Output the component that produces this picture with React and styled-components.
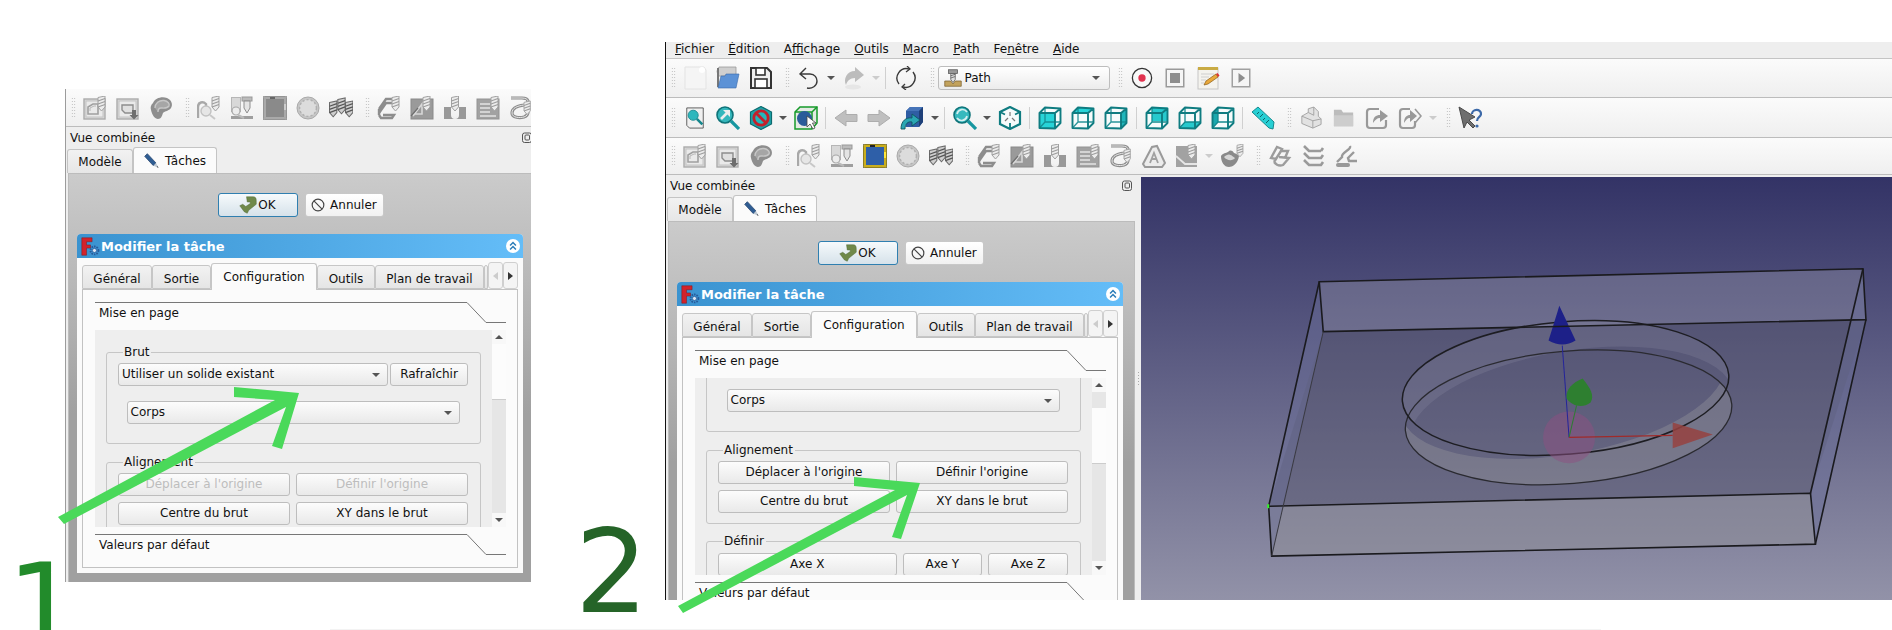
import React from "react";
import styled, { createGlobalStyle } from "styled-components";

const Global = createGlobalStyle`
  html, body { margin: 0; padding: 0; background: #fff; }
  body { font-family: "DejaVu Sans", sans-serif; font-size: 12px; color: #111; }
`;

const Canvas = styled.div`
  position: relative; width: 1892px; height: 630px; overflow: hidden; background: #fff;
`;
const Win = styled.div`
  position: absolute; left: ${p => p.$x}px; top: ${p => p.$y}px;
  width: ${p => p.$w}px; height: ${p => p.$h}px;
  overflow: hidden; background: #eeeeee; display: flex; flex-direction: column;
  border-left: 1px solid ${p => p.$edge};
`;
const MenuBar = styled.div`
  display: flex; height: 16px; line-height: 15px; padding-left: 2px; background: #eee;
  flex: none; border-bottom: 1px solid #c4c4c4; box-sizing: content-box;
`;
const MenuItem = styled.span`
  padding: 0 7px; white-space: nowrap;
`;
const Bar = styled.div`
  display: flex; align-items: center; flex: none; height: ${p => p.$h}px;
  background: linear-gradient(#fbfbfb, #efefef);
  border-bottom: 1px solid #bcbcbc; box-sizing: border-box; overflow: hidden; white-space: nowrap;
`;
const Handle = styled.i`
  flex: none; width: 5px; height: 22px; margin: 0 2.5px 0 ${p => p.$first ? 4.5 : 7.5}px;
  background-image: radial-gradient(circle, #b5b5b5 0.7px, transparent 0.8px);
  background-size: 2.5px 3px;
`;
const Sep = styled.i`
  flex: none; width: 1px; height: 22px; margin: 0 3.25px; background: #d0d0d0;
`;
const Slot = styled.span`
  flex: none; width: 33px; height: 24px; display: flex; align-items: center; justify-content: center;
`;
const Drop = styled.span`
  flex: none; width: 12px; display: flex; justify-content: center;
  &::after {
    content: ""; border: 4px solid transparent; border-bottom-width: 0;
    border-top: 4px solid ${p => p.$off ? "#ccc" : "#555"};
  }
`;
const WbCombo = styled.div`
  flex: none; width: 172px; height: 24px; box-sizing: border-box; margin-right: 1px;
  border: 1px solid #bdbdbd; border-radius: 3px; background: linear-gradient(#fff, #ececec);
  display: flex; align-items: center; gap: 3px; padding: 0 9px 0 5px;
`;
const WbName = styled.span` flex: 1; `;
const Caret = styled.i`
  flex: none; border: 4px solid transparent; border-bottom-width: 0; border-top: 4px solid #555;
`;
const Main = styled.div`
  display: flex; flex: 1; min-height: 0;
`;
const Dock = styled.div`
  flex: none; width: 470px; display: flex; flex-direction: column; background: #eee;
`;
const DockTitle = styled.div`
  flex: none; height: 20px; display: flex; align-items: center; justify-content: space-between;
  box-sizing: border-box; padding: 2px 0 0 4px; line-height: 18px;
`;
const FloatBtn = styled.svg` margin-right: 4px; flex: none; `;
const DockTabs = styled.div`
  flex: none; height: 26px; display: flex; align-items: flex-end; padding-left: 1px;
`;
const DockTab = styled.div`
  box-sizing: border-box; width: ${p => p.$w}px; height: ${p => p.$on ? 26 : 24}px;
  border: 1px solid #c4c4c4; border-bottom: 0; border-radius: 3px 3px 0 0;
  display: flex; align-items: center; justify-content: center; gap: 5px;
  background: ${p => p.$on ? "#fbfbfb" : "linear-gradient(#f2f2f2,#e6e6e6)"};
`;
const DockPanel = styled.div`
  margin-left: 2px; width: 467px; flex: none; height: 460px; box-sizing: border-box;
  border: 1px solid #bcbcbc; padding: 19px 0 0 8px;
  background: linear-gradient(#cbcbcb 0, #a0a0a0 240px, #a0a0a0 100%);
  display: flex; flex-direction: column;
`;
const Actions = styled.div`
  flex: none; display: flex; gap: 7px; height: 24px; margin-bottom: 17px; padding-left: 140.5px;
`;
const ActionBtn = styled.div`
  box-sizing: border-box; width: ${p => p.$w}px; height: 24px; border-radius: 3px;
  border: 1px solid ${p => p.$main ? "#2f7fb0" : "#c8c8c8"};
  background: ${p => p.$main ? "linear-gradient(#f6fafc,#d6e2ea)" : "linear-gradient(#fff,#f1f1f1)"};
  display: flex; align-items: center; justify-content: center; gap: 1px;
`;
const TaskBox = styled.div`
  flex: none; width: 446px; height: 339px; box-sizing: border-box; background: #fafafa;
  border-radius: 4px 4px 0 0; display: flex; flex-direction: column;
`;
const TaskHead = styled.div`
  flex: none; height: 24px; border-radius: 4px 4px 0 0; padding: 0 3.5px 0 4px;
  background: linear-gradient(90deg, #3a93d0, #64bdf8);
  display: flex; align-items: center; gap: 1px;
`;
const TaskTitle = styled.span`
  flex: 1; color: #fff; font-weight: 700; font-size: 13px;
`;
const TaskBody = styled.div`
  flex: 1; padding: 5px 5px 5px 5px; display: flex; flex-direction: column; min-height: 0;
`;
const SubTabs = styled.div`
  flex: none; height: 26px; display: flex; align-items: flex-end;
`;
const SubTab = styled.div`
  flex: none; box-sizing: border-box; width: ${p => p.$w}px; height: ${p => p.$on ? 27 : 24}px;
  margin-bottom: ${p => p.$on ? -1 : 0}px; position: relative;
  border: 1px solid #c6c6c6; border-bottom: ${p => p.$on ? 0 : "1px solid #c6c6c6"}; border-radius: 3px 3px 0 0;
  background: ${p => p.$on ? "#fbfbfb" : "linear-gradient(#f2f2f2,#e5e5e5)"};
  text-align: center; line-height: ${p => p.$on ? 26 : 24}px; overflow: hidden; white-space: nowrap;
  padding-top: ${p => p.$on ? 0 : 1}px;
`;
const TabArrow = styled.div`
  flex: none; box-sizing: border-box; width: 15px; height: 27px; margin-left: ${p => p.$gap}px;
  align-self: flex-end; border: 1px solid #cfcfcf; border-radius: 3px; background: #f4f4f4;
  display: flex; align-items: center; justify-content: center;
  &::after {
    content: ""; border-style: solid; border-color: transparent;
    border-width: 4px 0 4px 5px; border-left-color: #333;
    ${p => p.$left && "border-width: 4px 5px 4px 0; border-left-color: transparent; border-right-color: #ccc;"}
  }
`;
const Pane = styled.div`
  flex: 1; box-sizing: border-box; min-height: 0; border: 1px solid #c2c2c2; background: #fbfbfb;
  padding: 12px 11.5px 0 12px; display: flex; flex-direction: column;
`;
const Heading = styled.div`
  position: relative; flex: none; height: ${p => p.$h}px; padding: 3px 0 0 4px; line-height: 16px;
  box-sizing: border-box;
`;
const HeadLine = styled.svg`
  position: absolute; left: 0; top: 0; overflow: visible; pointer-events: none;
`;
const Scroll = styled.div`
  flex: none; height: 197px; display: flex; overflow: hidden; margin-bottom: 7px;
`;
const ScrollBody = styled.div`
  flex: 1; min-width: 0; background: #eeeeee; padding: 15px 11px 0 10.5px; overflow: hidden;
`;
const ScrollInner = styled.div`
  margin-top: ${p => p.$shift}px;
`;
const ScrollBar = styled.div`
  flex: none; width: 14px; display: flex; flex-direction: column; background: #e6e6e6;
`;
const ScrollBtn = styled.div`
  flex: none; height: 14px; background: #f8f8f8; display: flex; align-items: center; justify-content: center;
  &::after {
    content: ""; border-left: 4px solid transparent; border-right: 4px solid transparent;
    ${p => p.$down ? "border-top: 4px solid #555;" : "border-bottom: 4px solid #555;"}
  }
`;
const ScrollThumb = styled.div`
  flex: none; height: 56px; margin-top: ${p => p.$at}px; background: #fcfcfc;
  border-bottom: 1px solid #ccc; box-sizing: border-box;
`;
const ScrollRest = styled.div` flex: 1; `;
const Group = styled.fieldset`
  margin: 0 0 ${p => p.$gap}px; padding: ${p => p.$pt}px 11.5px ${p => p.$pb}px; min-width: 0;
  border: 1px solid #c6c6c6; border-radius: 3px;
`;
const Legend = styled.legend`
  margin-left: 5px; padding: 0 2px 0 1px; line-height: 14px;
`;
const Row = styled.div`
  display: flex; gap: 2px; margin-bottom: 15px;
`;
const Grid = styled.div`
  display: grid; grid-template-columns: ${p => p.$cols}; gap: 6px;
`;
const QBtn = styled.div`
  box-sizing: border-box; height: 23px; border: 1px solid #bdbdbd; border-radius: 3px;
  background: linear-gradient(#fcfcfc, #e9e9e9); text-align: center; line-height: 21px;
  color: ${p => p.$off ? "#bdbdbd" : "#111"}; flex: ${p => p.$grow ? "1" : "none"};
  white-space: nowrap;
`;
const QCombo = styled.div`
  box-sizing: border-box; height: 23px; border: 1px solid #bdbdbd; border-radius: 3px;
  background: linear-gradient(#fcfcfc, #e9e9e9); line-height: 21px; padding: 0 7px 0 3px;
  display: flex; align-items: center; justify-content: space-between;
  flex: none; width: ${p => p.$w}px; margin-left: ${p => p.$ml || 0}px;
`;
const Viewport = styled.div`
  flex: 1; min-width: 0; margin-top: 2px;
  background: linear-gradient(#333366, #9292a8);
`;
const Splitter = styled.div`
  flex: none; width: 5px; display: flex; align-items: center; justify-content: center;
  &::after {
    content: ""; width: 3px; height: 16px; margin-top: -17px;
    background-image: radial-gradient(circle, #aaa 0.6px, transparent 0.7px); background-size: 3px 3px;
  }
`;
const SceneSvg = styled.svg` display: block; width: 100%; height: 100%; `;
const Overlay = styled.svg`
  position: absolute; left: 0; top: 0; pointer-events: none;
`;
const Numeral = styled.span`
  position: absolute; left: ${p => p.$x}px; top: ${p => p.$y}px; font-family: "DejaVu Sans", sans-serif;
  font-size: 115px; line-height: 1; color: ${p => p.$c};
`;
const FootLine = styled.div`
  position: absolute; left: 330px; top: 629px; width: 1271px; height: 1px; background: #f3f3f3;
`;

/* ---------- icon drawing ---------- */
const S = ({ children, w = 24, h = 24 }) => (
  <svg width={w} height={h} viewBox="0 0 24 24" style={{ display: "block" }}>{children}</svg>
);
const Bit = ({ x = 16, y = 1, k = 1, dark }) => (
  <g transform={`translate(${x} ${y}) scale(${k})`}>
    <path d="M0 1.5 L7 0 V11 L3.5 15 L0 11 Z" fill={dark ? "#cfcfcf" : "#ececec"} stroke={dark ? "#6a6a6a" : "#a2a2a2"} strokeWidth="1" />
    <path d="M0 5 L7 2.5 M0 8 L7 5.5 M0 11 L7 8.5" stroke={dark ? "#555" : "#9c9c9c"} strokeWidth="1.2" />
  </g>
);
const Frame = ({ children }) => (
  <g>
    <rect x="1" y="3" width="21" height="20" fill="#d9d9d9" stroke="#ababab" strokeWidth="1.4" />
    <rect x="3" y="5" width="17" height="16" fill="#eaeaea" stroke="#c4c4c4" />
    {children}
  </g>
);

const G = {
  contour: () => <S><Frame><path d="M5 17 V11 L10 8 H15 V18 H5 Z" fill="none" stroke="#a0a0a0" strokeWidth="1.6" /><path d="M7 15 V12 L11 10 H13" fill="none" stroke="#b8b8b8" /></Frame><Bit x="15" y="0" /></S>,
  pocketShape: () => <S><Frame><path d="M6 9 H17 V17 H9 L6 14 Z" fill="#e0e0e0" stroke="#8d8d8d" strokeWidth="1.4" /></Frame><path d="M16 14 h4 v5 h2.5 l-4.5 4.5 -4.5 -4.5 h2.5 z" fill="#6e6e6e" /></S>,
  head: () => <S><path d="M2 14 C1 10 3 8 4 7 C6 2 13 0 18 2 C23 4 24 9 22 12 C20 15 16 15 14 17 C13 20 12 23 9 23 C6 23 3 19 2 14 Z" fill="#8e8e8e" /><path d="M6 12 C6 7 10 4 15 4.5 C19 5 21 8 20 10 C18 13 14 12 12 12 C10 12 9 14 9 16" fill="#a6a6a6" stroke="#c6c6c6" strokeWidth="1.4" /></S>,
  ringBit: () => <S><path d="M1 22 V11 C1 6 6 5 9 8 V16" fill="none" stroke="#a8a8a8" strokeWidth="2.4" /><circle cx="9" cy="15" r="5" fill="#e6e6e6" stroke="#c2c2c2" strokeWidth="1.4" /><path d="M13 19 L18 23" stroke="#c8c8c8" strokeWidth="2" /><Bit x="15" y="0" /></S>,
  machine: () => <S><rect x="1.5" y="1.5" width="9" height="14" fill="#d8d8d8" stroke="#b6b6b6" /><rect x="12" y="1" width="10" height="4" fill="#bbb" stroke="#999" /><path d="M14 5 H20 V12 L17 17 L14 12 Z" fill="#e4e4e4" stroke="#8e8e8e" /><circle cx="6" cy="15" r="4" fill="#ececec" stroke="#a8a8a8" strokeWidth="1.2" /><rect x="1" y="20" width="22" height="3" fill="#9e9e9e" /><path d="M8 19 L14 22" stroke="#bbb" strokeWidth="2" /></S>,
  board: ({ c }) => <S><rect x="1.5" y="1.5" width="21" height="21" rx="1" fill={c ? "#2e5fa8" : "#8a8a8a"} stroke={c ? "#c9ae1e" : "#a9a9a9"} strokeWidth="3" /><rect x="0" y="0" width="24" height="24" rx="1" fill="none" stroke={c ? "#3a3a2a" : "#777"} strokeWidth=".8" /><rect x="7" y="1" width="5" height="2" fill={c ? "#222" : "#666"} /><rect x="21" y="8" width="2" height="6" fill={c ? "#ffe63a" : "#ccc"} /></S>,
  disc: () => <S><circle cx="12" cy="12" r="11" fill="#c6c6c6" stroke="#aaa" strokeWidth="1" /><circle cx="12" cy="12" r="8.4" fill="#dcdcdc" stroke="#b0b0b0" strokeWidth="1.4" strokeDasharray="2.2 2" /></S>,
  threeBits: () => <S><Bit x="0.5" y="5" k="1.05" dark /><Bit x="8.8" y="2" k="1.05" dark /><Bit x="16.5" y="5" k="1.05" dark /></S>,
  stackBit: () => <S><path d="M2 13 L9 3 H15 M2 17 L9 7 H15 M2 19 L4 22 H15 L17 19 H6" fill="none" stroke="#8d8d8d" strokeWidth="2.4" /><path d="M2 13 V19" stroke="#8d8d8d" strokeWidth="2.4" /><Bit x="15" y="0" /></S>,
  diagBit: () => <S><rect x="1" y="3" width="22" height="20" fill="#9a9a9a" stroke="#8a8a8a" /><path d="M3 20 L12 8 V18 H3" fill="none" stroke="#d8d8d8" strokeWidth="1.6" /><path d="M1 20 L8 12" stroke="#6e6e6e" strokeWidth="1.2" /><Bit x="13" y="0" /></S>,
  blockBit: () => <S><path d="M1 11 H8 V19 A3.5 3.5 0 0 0 16 19 V11 H23 V23 H1 Z" fill="#999" /><Bit x="8.5" y="0" /><path d="M10 20 A2 2 0 0 0 14 20" stroke="#eee" fill="none" /></S>,
  linesBit: () => <S><rect x="1" y="3" width="22" height="20" fill="#a2a2a2" stroke="#939393" /><path d="M4 8 H14 M4 12 H14 M4 16 H14 M4 20 H20" stroke="#e4e4e4" strokeWidth="1.5" /><Bit x="15" y="0" /></S>,
  spiral: () => <S>{[3.2, 1].map((sw, i) => <path key={sw} d="M2 2 H13 C20 2 21 7 15 9 C8 10 3 12 3 17 C3 22 11 22 15 21 C18 20 19 18 19 16" fill="none" stroke={i ? "#e6e6e6" : "#8c8c8c"} strokeWidth={sw} />)}<Bit x="15" y="5" k=".9" /></S>,
  engrave: () => <S><path d="M1 20 L10 3 L15 2 L23 19 L20 23 H3 Z" fill="#ececec" stroke="#9a9a9a" strokeWidth="2" /><path d="M8 19 L12 9 L16 19 M9.5 15 H14.5" fill="none" stroke="#a0a0a0" strokeWidth="1.8" /></S>,
  vBit: () => <S><rect x="1" y="2" width="21" height="21" fill="#a2a2a2" /><path d="M1 12 L10 20 H22" fill="none" stroke="#e6e6e6" strokeWidth="1.8" /><Bit x="13" y="0" /></S>,
  bowl: () => <S><path d="M1 12 C3 9 6 9 8 8 C10 6 12 6 14 9 C16 10 18 10 19 12 C18 20 12 23 9 23 C4 23 1 18 1 12 Z" fill="#8a8a8a" /><path d="M4 13 C6 11 9 10 10 11 C12 11 13 13 15 14 C13 17 7 17 4 13 Z" fill="#d6d6d6" /><Bit x="17" y="0" k=".85" /></S>,
  loops: () => <S><path d="M3 14 L9 3 L14 5 L8 15 Z M6 18 L13 7 H20 L17 14 M6 18 Q10 23 15 21 L21 14 L11 13" fill="none" stroke="#9c9c9c" strokeWidth="2.4" /></S>,
  zig: () => <S><path d="M3 2 L8 7 H20 M3 9 L8 14 H20 L22 11 M3 16 L8 21 H20 L22 18 M20 7 L22 4" fill="none" stroke="#9a9a9a" strokeWidth="2.6" /></S>,
  slither: () => <S><path d="M16 2 C18 6 7 8 8 13 L3 18 M20 8 L14 14 L15 17 H23" fill="none" stroke="#999" strokeWidth="2.4" /><rect x="2" y="19" width="14" height="4" rx="2" fill="#999" /></S>,

  newDoc: () => <S><path d="M2 1 H21 L23 4 V23 H2 Z" fill="#f5f5f5" stroke="#e3e3e3" /><circle cx="19" cy="4" r="3" fill="#fff" /></S>,
  open: () => <S><path d="M1 5 L3 1 H20 V10 H2 Z" fill="#cfcfcf" stroke="#9a9a9a" strokeWidth=".8" /><path d="M2 2 V21" stroke="#777" strokeWidth="2" /><path d="M2 22 L5 10 H9 L10 8 H23 L20 22 Z" fill="#5c92d6" stroke="#3a6aa8" strokeWidth=".6" /></S>,
  save: () => <S><path d="M2 2 H18 L22 6 V22 H2 Z" fill="#efefef" stroke="#333" strokeWidth="2" /><rect x="7" y="2" width="9" height="7" fill="#fff" stroke="#333" strokeWidth="1.6" /><rect x="6" y="13" width="12" height="9" fill="#fff" stroke="#333" strokeWidth="1.6" /></S>,
  undo: () => <S><path d="M9 2 L3 8 L9 13 M3 8 H13 C18 8 20 12 20 15 C20 20 15 23 10 22" fill="none" stroke="#3a3a3a" strokeWidth="1.4" /></S>,
  redo: () => <S><path d="M13 1 L22 9 L13 16 V12 C8 12 5 15 4 19 C1 13 5 5 13 5 Z" fill="#bcbcbc" /><ellipse cx="11" cy="21" rx="8" ry="2.5" fill="#e6e6e6" /></S>,
  refresh: () => <S><path d="M5 18 A9.5 9.5 0 0 1 15 3 M19 6 A9.5 9.5 0 0 1 9 21" fill="none" stroke="#3a3a3a" strokeWidth="1.4" /><path d="M13 0 L16 3 L12 6 M11 18 L8 21 L12 24" fill="none" stroke="#3a3a3a" strokeWidth="1.3" /></S>,
  wb: () => <S w={18} h={18}><rect x="6" y="1" width="12" height="5" fill="#999" stroke="#555" /><path d="M9 6 H15 V14 L12 18 L9 14 Z" fill="#ddd" stroke="#555" /><path d="M9 9 L15 7 M9 12 L15 10" stroke="#555" /><path d="M1 16 H9 L12 20 L15 16 H23 V23 H1 Z" fill="#c2a25c" stroke="#7b6230" /></S>,
  record: () => <S w={22} h={22}><circle cx="12" cy="12" r="10.5" fill="#f8f8f8" stroke="#333" strokeWidth="1.4" /><circle cx="12" cy="12" r="4" fill="#e1324f" /></S>,
  stop: () => <S w={20} h={20}><rect x="1.5" y="1.5" width="21" height="21" fill="#f5f5f5" stroke="#9a9a9a" strokeWidth="1.8" /><rect x="6" y="6" width="12" height="12" fill="#8d8d8d" /></S>,
  note: () => <S><rect x="2" y="2" width="20" height="21" fill="#f4f3ee" stroke="#c6c6c6" /><rect x="2" y="1" width="20" height="3" fill="#c9ab44" /><path d="M5 8 H18 M5 11 H13 M5 14 H10 M5 17 H8" stroke="#cfcfcf" /><path d="M8 19 L10 15 L20 8 L22 11 L12 18 Z" fill="#e9a93b" stroke="#8a5c12" strokeWidth=".7" /><path d="M20 8 L22 11 L23.5 9.5 L21.5 7 Z" fill="#d33" /></S>,
  play: () => <S w={20} h={20}><rect x="1.5" y="1.5" width="21" height="21" fill="#f5f5f5" stroke="#a0a0a0" strokeWidth="1.8" /><path d="M9 6 L17 12 L9 18 Z" fill="#8d8d8d" /></S>,

  docZoom: () => <S w={22} h={24}><path d="M3 1 H21 V23 H6 L3 20 Z" fill="#f0f0f0" stroke="#555" /><circle cx="10" cy="9" r="5.5" fill="#2db7bd" stroke="#1a8b90" strokeWidth="1" /><path d="M14 13 L20 19" stroke="#15868c" strokeWidth="2.8" /></S>,
  zoomArrow: () => <S><circle cx="9" cy="9" r="8" fill="#35b7bc" stroke="#0f7379" strokeWidth="1.6" /><path d="M15 15 L23 23" stroke="#1696a0" strokeWidth="3.2" /><path d="M5 13 L12 6" stroke="#eee" strokeWidth="2.6" /><path d="M7 4 H14 V11 Z" fill="#eee" /></S>,
  noHex: () => <S><path d="M12 0.5 L22.5 6 V18 L12 23.5 L1.5 18 V6 Z" fill="#1ea2a8" stroke="#0d6a6e" strokeWidth="1.2" /><circle cx="12" cy="12" r="7.2" fill="#23b6bb" stroke="#c2202b" strokeWidth="2.8" /><path d="M7 7 L17 17" stroke="#c2202b" strokeWidth="2.8" /></S>,
  cubeSel: () => <S><path d="M1 6 L6 1 H23 V17 L18 23 H1 Z" fill="#e4eae4" stroke="#169a2a" strokeWidth="1.5" /><path d="M1 6 H18 V23 M18 6 L23 1" stroke="#169a2a" fill="none" strokeWidth="1.5" /><circle cx="10.5" cy="12.5" r="7.5" fill="#2b5c9a" /><path d="M13 10 V21 L16 18 L19 23 L21 22 L18.5 17 H22 Z" fill="#fff" stroke="#444" strokeWidth=".8" /></S>,
  back: () => <S><path d="M12 4 L1 12 L12 20 V15.5 H23 V8.5 H12 Z" fill="#bfbfbf" stroke="#adadad" /></S>,
  forward: () => <S><path d="M12 4 L23 12 L12 20 V15.5 H1 V8.5 H12 Z" fill="#bfbfbf" stroke="#adadad" /></S>,
  blueCube: () => <S><path d="M6 5 L10 1 H23 V16 L19 21 H6 Z" fill="#2f5da3" /><path d="M6 5 H19 L23 1 H10 Z" fill="#4674b8" /><path d="M19 5 V21 L23 16 V1 Z" fill="#1e3f78" /><path d="M1 23 C1 15 6 11 12 12 V8 L20 14 L12 20 V16 C8 15 5 18 5 23 Z" fill="#2aa6b3" stroke="#0e5660" strokeWidth=".9" /></S>,
  zoomSync: () => <S><circle cx="9" cy="9" r="8" fill="#37b9be" stroke="#0f7379" strokeWidth="1.6" /><path d="M15 15 L23 23" stroke="#1696a0" strokeWidth="3.2" /><path d="M4 8 A5.5 5.5 0 0 1 14 6 M14 10 A5.5 5.5 0 0 1 4 12" fill="none" stroke="#d7eeef" strokeWidth="1.7" /></S>,
  ruler: () => <S><path d="M1 6 L7 1 L23 16 L22 23 L18 22 Z" fill="#27cfd4" stroke="#17898e" /><path d="M6 8 L8 6 M9 11 L12 8 M12 14 L14 12 M15 17 L18 14" stroke="#0f6468" /></S>,
  part: () => <S w={22} h={24}><path d="M2 10 L9 6 V2 L15 0 L20 5 V10 L23 13 V19 L14 23 L2 18 Z" fill="#e2e2e2" stroke="#a0a0a0" /><path d="M2 10 L14 15 L23 13 M14 15 V23 M9 6 L15 9 V5 M15 0 V5" fill="none" stroke="#a0a0a0" /></S>,
  folderGray: () => <S w={22} h={22}><path d="M1 3 H9 L11 6 H22 V21 H1 Z" fill="#bcbcbc" /><path d="M1 9 H22 V21 H1 Z" fill="#cdcdcd" /></S>,
  share: () => <S><path d="M14 3 H5 Q2 3 2 6 V19 Q2 22 5 22 H18 Q21 22 21 19 V14" fill="none" stroke="#999" strokeWidth="2.2" /><path d="M8 17 C8 11 11 9 15 9 V4 L23 10 L15 16 V12 C12 12 10 14 8 17 Z" fill="#999" /></S>,
  share2: () => <S w={24}><path d="M12 3 H5 Q2 3 2 6 V19 Q2 22 5 22 H14 Q17 22 17 19 V15" fill="none" stroke="#999" strokeWidth="2.2" /><path d="M6 17 C6 11 9 9 12 9 V4 L19 10 L12 16 V12 C9 12 8 14 6 17 Z" fill="#999" /><path d="M17 3 L23 10 L17 17" fill="none" stroke="#999" strokeWidth="1.6" /></S>,
  help: () => <S><path d="M1 1 L6 22 L9 16 L15 22 L17 20 L11 14 L17 11 Z" fill="#6e6e6e" stroke="#4a4a4a" /><path d="M14 8 C14 3 23 2 23 8 C23 11 19 11 19 15" fill="none" stroke="#3c69a8" strokeWidth="2.2" /><circle cx="19" cy="20" r="1.6" fill="#3c69a8" /></S>,
  ok: () => <S w={18} h={18}><path d="M10 1 H19 C22 1 23 3 23 6 V11 L13 19 L11 23 L7 21 L1 13 L5 11 L9 14 L15 10 V8 H11 Z" fill="#70894a" stroke="#4f6633" strokeWidth=".6" /></S>,
  ban: () => <S w={14} h={14}><circle cx="12" cy="12" r="10" fill="none" stroke="#444" strokeWidth="2" /><path d="M5 5 L19 19" stroke="#444" strokeWidth="2" /></S>,
  pencil: () => <S w={16} h={16}><path d="M1 5 L5 1 L18 15 L14 19 Z" fill="#2f5d93" stroke="#1e3d66" /><path d="M14 19 L18 15 L22 22 Z" fill="#bcc7d2" /><path d="M20 20 L22 22 L19 21 Z" fill="#111" /></S>,
  logo: () => <S w={19} h={19}><path d="M1 1 H14 V6 H7 V10 H12 V14 H7 V23 H1 Z" fill="#d3232b" stroke="#80151a" strokeWidth=".6" /><circle cx="17" cy="17" r="5" fill="none" stroke="#275a9b" strokeWidth="2.4" strokeDasharray="2 1.2" /><circle cx="17" cy="17" r="2.6" fill="#dde7f4" stroke="#275a9b" /></S>,
  collapse: () => <S w={14} h={14}><circle cx="12" cy="12" r="12" fill="#fff" /><path d="M7 11 L12 6 L17 11 M7 18 L12 13 L17 18" fill="none" stroke="#2a7cb8" strokeWidth="2.6" /></S>
};

const Cube = ({ face }) => (
  <S>
    <path d="M1.5 7 L7 1.5 L22.5 2.5 L22.5 17 L17 22.5 L1.5 22 Z" fill="#f6fbfb" />
    {face === "rear" && <path d="M7 1.5 H22.5 V15 H7 Z" fill="#27c9cd" />}
    {face === "floor" && <path d="M7 16 H22.5 L17 22.5 H1.5 Z" fill="#27c9cd" />}
    {face === "leftSide" && <path d="M1.5 7 L7 1.5 V16 L1.5 22 Z" fill="#1aa8ad" />}
    {face === "front" && <path d="M1.5 7 H17 V22.5 L1.5 22 Z" fill="#27d4d8" />}
    {face === "top" && <path d="M1.5 7 L7 1.5 L22.5 2.5 L17 7 Z" fill="#27d4d8" />}
    {face === "side" && <path d="M17 7 L22.5 2.5 V17 L17 22.5 Z" fill="#1fb6bb" />}
    <path d="M7 1.5 V16 H22.5 M7 16 L1.5 22" fill="none" stroke="#148a8f" strokeWidth="1.3" opacity={face === "rear" || face === "floor" || face === "leftSide" ? 1 : 0.9} />
    <path d="M1.5 7 L7 1.5 L22.5 2.5 V17 L17 22.5 L1.5 22 Z M1.5 7 H17 V22.5 M17 7 L22.5 2.5" fill="none" stroke="#0f7c81" strokeWidth="1.9" strokeLinejoin="round" />
  </S>
);
const Iso = () => (
  <S><path d="M12 1 L22 6 V18 L12 23 L2 18 V6 Z" fill="#f6fbfb" stroke="#0f7c81" strokeWidth="2.2" /><path d="M2 6 L7 8.5 M22 6 L17 8.5 M12 23 V17" stroke="#0f7c81" strokeWidth="1.8" /><path d="M12 6 V10 M10 12 L7 15 M14 12 L17 15" stroke="#777" strokeWidth="1.2" /></S>
);
const I = ({ n, ...rest }) => { const C = G[n]; return <Slot><C {...rest} /></Slot>; };
const C3 = ({ face }) => <Slot><Cube face={face} /></Slot>;

const PathTools = ({ color }) => (
  <>
    <Handle $first />
    <I n="contour" /><I n="pocketShape" /><I n="head" />
    <Handle />
    <I n="ringBit" /><I n="machine" /><I n="board" c={color} /><I n="disc" /><I n="threeBits" />
    <Handle />
    <I n="stackBit" /><I n="diagBit" /><I n="blockBit" /><I n="linesBit" /><I n="spiral" /><I n="engrave" /><I n="vBit" />
    <Drop $off />
    <I n="bowl" />
    <Handle />
    <I n="loops" /><I n="zig" /><I n="slither" />
  </>
);

const Under = ({ pre = "", k, post = "" }) => <MenuItem>{pre}<u>{k}</u>{post}</MenuItem>;

const Corner = () => (
  <HeadLine width="411" height="21">
    <path d="M0 .5 H372 L391 20.5 H411" fill="none" stroke="#777" strokeWidth="1" />
  </HeadLine>
);

const DockView = ({ title, shift, thumbAt, disabled }) => (
  <Dock>
    <DockTitle>
      <span>{title}</span>
      <FloatBtn width="10" height="12" viewBox="0 0 10 12">
        <rect x=".5" y="1" width="9" height="9.5" rx="2" fill="none" stroke="#555" />
        <rect x="3" y="3" width="4.5" height="5" rx="1" fill="none" stroke="#555" />
      </FloatBtn>
    </DockTitle>
    <DockTabs>
      <DockTab $w={66}>Modèle</DockTab>
      <DockTab $w={84} $on><G.pencil />Tâches</DockTab>
    </DockTabs>
    <DockPanel>
      <Actions>
        <ActionBtn $w={80} $main><G.ok />OK</ActionBtn>
        <ActionBtn $w={79}><G.ban />&nbsp;Annuler</ActionBtn>
      </Actions>
      <TaskBox>
        <TaskHead>
          <G.logo />
          <TaskTitle>Modifier la tâche</TaskTitle>
          <G.collapse />
        </TaskHead>
        <TaskBody>
          <SubTabs>
            <SubTab $w={70}>Général</SubTab>
            <SubTab $w={59}>Sortie</SubTab>
            <SubTab $w={106} $on>Configuration</SubTab>
            <SubTab $w={58}>Outils</SubTab>
            <SubTab $w={109}>Plan de travail</SubTab>
            <SubTab $w={4} />
            <TabArrow $left $gap={0} />
            <TabArrow $gap={0} />
          </SubTabs>
          <Pane>
            <Heading $h={28}><Corner />Mise en page</Heading>
            <Scroll>
              <ScrollBody>
                <ScrollInner $shift={shift}>
                  <Group $gap={11} $pt={4} $pb={19}>
                    <Legend>Brut</Legend>
                    <Row>
                      <QCombo $w={270}>Utiliser un solide existant<Caret /></QCombo>
                      <QBtn $grow>Rafraîchir</QBtn>
                    </Row>
                    <QCombo $w={333} $ml={8.5}>Corps<Caret /></QCombo>
                  </Group>
                  <Group $gap={10} $pt={4} $pb={10}>
                    <Legend>Alignement</Legend>
                    <Grid $cols="1fr 1fr">
                      <QBtn $off={disabled}>Déplacer à l'origine</QBtn>
                      <QBtn $off={disabled}>Définir l'origine</QBtn>
                      <QBtn>Centre du brut</QBtn>
                      <QBtn>XY dans le brut</QBtn>
                    </Grid>
                  </Group>
                  <Group $gap={10} $pt={5} $pb={10}>
                    <Legend>Définir</Legend>
                    <Grid $cols="178.5px 79.5px 1fr">
                      <QBtn>Axe X</QBtn>
                      <QBtn>Axe Y</QBtn>
                      <QBtn>Axe Z</QBtn>
                    </Grid>
                  </Group>
                </ScrollInner>
              </ScrollBody>
              <ScrollBar>
                <ScrollBtn />
                <ScrollThumb $at={thumbAt} />
                <ScrollRest />
                <ScrollBtn $down />
              </ScrollBar>
            </Scroll>
            <Heading $h={34}><Corner />Valeurs par défaut</Heading>
          </Pane>
        </TaskBody>
      </TaskBox>
    </DockPanel>
  </Dock>
);

const ELL_A = { cx: 1565, cy: 387.5, rx: 163.5, ry: 66.4, transform: "rotate(-4.7 1565 387.5)" };
const ELL_B = { cx: 1568, cy: 417, rx: 163.5, ry: 66.4, transform: "rotate(-4.7 1568 417)" };

const Scene = () => (
  <SceneSvg viewBox="1141 176 751 424" preserveAspectRatio="none">
    <defs>
      <mask id="outsideA">
        <rect x="1141" y="176" width="751" height="424" fill="#fff" />
        <ellipse {...ELL_A} fill="#000" />
      </mask>
      <mask id="outsideB">
        <rect x="1141" y="176" width="751" height="424" fill="#fff" />
        <ellipse {...ELL_B} fill="#000" />
      </mask>
    </defs>
    <polygon points="1319,281 1862,268 1865,319 1323,331" fill="#8e8ea4" fillOpacity=".42" />
    <polygon points="1323,331 1865,319 1809.6,493 1268.5,506" fill="#55556a" fillOpacity=".45" />
    <polygon points="1268.5,506 1809.6,493 1814.5,544 1271.5,556" fill="#8f8f98" fillOpacity=".5" />
    <polygon points="1319,281 1323,331 1271.5,556 1268.5,506" fill="#6b6f98" fillOpacity=".45" />
    <polygon points="1862,268 1865,319 1814.5,544 1809.6,493" fill="#6b6f98" fillOpacity=".45" />
    <ellipse {...ELL_B} fill="#a6a6a6" fillOpacity=".3" mask="url(#outsideA)" />
    <ellipse {...ELL_A} fill="#8a8aa2" fillOpacity=".28" mask="url(#outsideB)" />
    <ellipse {...ELL_B} fill="none" stroke="#2a2a30" strokeWidth="1.3" />
    <ellipse {...ELL_A} fill="none" stroke="#1d1d22" strokeWidth="1.5" />
    <ellipse cx="1568.5" cy="437" rx="26" ry="26" fill="#8e4f82" fillOpacity=".5" />
    <path d="M1568.5 437 L1561.7 345" stroke="#25259a" strokeWidth="1" />
    <path d="M1568.5 437 L1576 405" stroke="#2d7d32" strokeWidth="1" />
    <path d="M1568.5 437 L1672 435" stroke="#a02a2a" strokeWidth="1.4" />
    <path d="M1558.8 305 L1575 340 Q1562 348 1548 340 Z" fill="#1d2088" />
    <path d="M1582 378 C1590 388 1594 395 1590 402 C1582 408 1572 406 1566 398 C1565 389 1572 382 1582 378 Z" fill="#2e7f30" />
    <polygon points="1672,422 1712,434 1672,448" fill="#96423f" fillOpacity=".85" />
    <g fill="none" stroke="#1a1a1e" strokeWidth="1.6">
      <path d="M1319 281 L1862 268 L1865 319 L1323 331 Z" />
      <path d="M1319 281 L1268.5 506 M1862 268 L1809.6 493 M1865 319 L1814.5 544" />
      <path d="M1268.5 506 L1809.6 493 L1814.5 544 L1271.5 556 Z" />
    </g>
    <path d="M1323 331 L1271.5 556" stroke="#3a3a42" strokeWidth="1" />
    <rect x="1267" y="504" width="2" height="4" fill="#36f02c" />
  </SceneSvg>
);

export default function App() {
  return (
    <Canvas>
      <Global />
      <Win $x={65} $y={89} $w={465} $h={493} $edge="#9c9c9c">
        <Bar $h={38}><PathTools /></Bar>
        <DockView title="Vue combinée" shift={0} thumbAt={0} disabled />
      </Win>

      <Win $x={665} $y={42} $w={1227} $h={558} $edge="#111">
        <MenuBar>
          <Under k="F" post="ichier" />
          <Under k="É" post="dition" />
          <Under pre="A" k="f" post="fichage" />
          <Under k="O" post="utils" />
          <Under k="M" post="acro" />
          <Under k="P" post="ath" />
          <Under pre="Fe" k="n" post="être" />
          <Under k="A" post="ide" />
        </MenuBar>
        <Bar $h={39}>
          <Handle $first />
          <I n="newDoc" /><I n="open" /><I n="save" />
          <Handle />
          <I n="undo" /><Drop /><I n="redo" /><Drop $off /><Sep /><I n="refresh" />
          <Handle />
          <WbCombo><G.wb /><WbName>Path</WbName><Caret /></WbCombo>
          <Handle />
          <I n="record" /><I n="stop" /><I n="note" /><I n="play" />
        </Bar>
        <Bar $h={40}>
          <Handle $first />
          <I n="docZoom" /><I n="zoomArrow" /><I n="noHex" /><Drop /><I n="cubeSel" /><Sep />
          <I n="back" /><I n="forward" /><I n="blueCube" /><Drop /><Sep />
          <I n="zoomSync" /><Drop /><Slot><Iso /></Slot><Sep />
          <C3 face="front" /><C3 face="top" /><C3 face="side" /><Sep />
          <C3 face="rear" /><C3 face="floor" /><C3 face="leftSide" /><Sep />
          <I n="ruler" />
          <Handle />
          <I n="part" /><I n="folderGray" /><I n="share" /><I n="share2" /><Drop $off />
          <Handle />
          <I n="help" />
        </Bar>
        <Bar $h={37}><PathTools color /></Bar>
        <Main>
          <DockView title="Vue combinée" shift={-60} thumbAt={16} />
          <Splitter />
          <Viewport><Scene /></Viewport>
        </Main>
      </Win>

      <Numeral $x={7} $y={549} $c="#228b2b">1</Numeral>
      <Numeral $x={575} $y={515} $c="#256428">2</Numeral>
      <FootLine />

      <Overlay width="1892" height="630" viewBox="0 0 1892 630">
        <polygon fill="#4ad95a" points="234,387 299,393 282,449 272,446 286,407 64,524 58,517 275,400 234,397" />
        <polygon fill="#4ad95a" points="854,477 920,483 901,539 892,537 907,495 683,613 678,606 895,490 854,486" />
      </Overlay>
    </Canvas>
  );
}
